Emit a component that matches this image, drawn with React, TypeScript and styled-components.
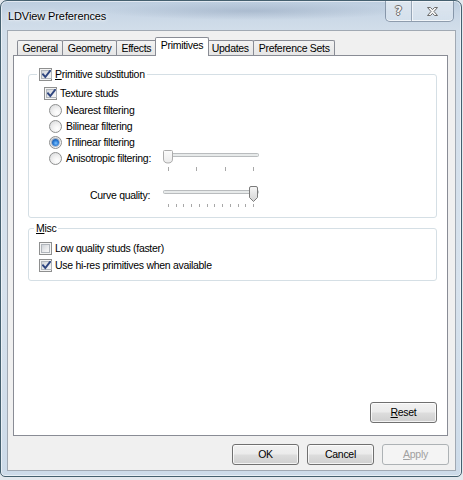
import React from 'react';
import styled, { createGlobalStyle } from 'styled-components';

const Global = createGlobalStyle`
  html, body { margin: 0; padding: 0; }
  body {
    background: #e3e8ed;
    width: 463px;
    height: 480px;
    overflow: hidden;
    font-family: "Liberation Sans", Arial, sans-serif;
    font-size: 10.5px;
    letter-spacing: -0.3px;
    color: #000;
  }
`;

const Window = styled.div`
  box-sizing: border-box;
  width: 462px;
  height: 477px;
  border: 1px solid #45606f;
  border-radius: 7px 7px 5px 5px;
  background:
    radial-gradient(ellipse 150px 9px at 250px 10px, rgba(110, 130, 160, 0.3), rgba(110, 130, 160, 0) 100%),
    linear-gradient(180deg, #bccddf 0px, #c9d7e6 14px, #d2deea 30px, #d7e2ed 60%, #cddbe9 100%);
  box-shadow: inset 0 0 0 1px rgba(255, 255, 255, 0.55);
  padding: 0 5px 5px 6px;
  display: flex;
  flex-direction: column;
`;

const TitleBar = styled.div`
  height: 29px;
  display: flex;
  align-items: flex-start;
  justify-content: space-between;
  flex-shrink: 0;
`;

const Title = styled.div`
  margin: 9px 0 0 1px;
  font-size: 11px;
  line-height: 13px;
  letter-spacing: -0.1px;
  text-shadow: 0 0 5px #fff, 0 0 2px #fff;
`;

const CaptionButtons = styled.div`
  display: flex;
  height: 20px;
  margin-right: 2px;
  border: 1px solid rgba(70, 90, 115, 0.55);
  border-top: none;
  border-radius: 0 0 5px 5px;
  overflow: hidden;
  background: linear-gradient(180deg, rgba(255, 255, 255, 0.5), rgba(225, 235, 245, 0.35));
  box-shadow: inset 0 -1px 0 rgba(255, 255, 255, 0.65);
`;

const CaptionButton = styled.div<{ $w: number }>`
  box-sizing: border-box;
  width: ${p => p.$w}px;
  display: flex;
  align-items: center;
  justify-content: center;
  & + & {
    border-left: 1px solid rgba(70, 90, 115, 0.45);
    box-shadow: inset 1px 0 0 rgba(255, 255, 255, 0.6);
  }
`;

const HelpGlyph = styled.span`
  font-family: "DejaVu Sans", sans-serif;
  font-weight: bold;
  font-size: 12px;
  line-height: 12px;
  letter-spacing: 0;
  color: #f4f4f4;
  text-shadow: 1px 0 0 #6d6d6d, -1px 0 0 #6d6d6d, 0 1px 0 #6d6d6d, 0 -1px 0 #6d6d6d;
`;

const Client = styled.div`
  flex: 1;
  min-height: 0;
  background: #f0f0f0;
  border: 1px solid #a1a9b3;
  display: flex;
  flex-direction: column;
  padding: 6px 7px 5px 5px;
`;

const TabStrip = styled.div`
  height: 18px;
  display: flex;
  align-items: flex-end;
  padding-left: 4px;
  flex-shrink: 0;
`;

const Tab = styled.div<{ $active?: boolean }>`
  box-sizing: border-box;
  position: relative;
  height: ${p => (p.$active ? 19 : 15)}px;
  margin-bottom: ${p => (p.$active ? -1 : 0)}px;
  margin-left: ${p => (p.$active ? -2 : -1)}px;
  margin-right: ${p => (p.$active ? -2 : 0)}px;
  z-index: ${p => (p.$active ? 1 : 0)};
  padding: ${p => (p.$active ? '0 5px' : '0 4.5px')};
  line-height: ${p => (p.$active ? 15 : 15)}px;
  border: 1px solid #898c95;
  border-bottom: none;
  border-radius: 2px 2px 0 0;
  background: ${p => (p.$active ? '#fff' : 'linear-gradient(180deg, #f3f3f3 0%, #ececec 50%, #e6e6e6 100%)')};
  white-space: nowrap;
  &:first-child { margin-left: 0; }
`;

const Page = styled.div`
  flex: 1;
  min-height: 0;
  background: #fff;
  border: 1px solid #898c95;
  display: flex;
  flex-direction: column;
`;

const Group = styled.fieldset<{ $top: number }>`
  margin: ${p => p.$top}px 10px 0 14px;
  padding: 0;
  border: 1px solid #d5dfe5;
  border-radius: 3px;
  min-width: 0;
`;

const Legend = styled.legend<{ $indent: number }>`
  margin-left: ${p => p.$indent}px;
  padding: 0 2px;
  height: 13px;
  line-height: 13px;
  display: flex;
  align-items: center;
  gap: 3px;
`;

const GroupBody = styled.div<{ $pt: number; $pb: number }>`
  padding: ${p => p.$pt}px 0 ${p => p.$pb}px 0;
  display: flex;
  flex-direction: column;
`;

const Row = styled.div<{ $indent: number; $mt?: number }>`
  height: 16px;
  display: flex;
  align-items: center;
  gap: ${p => (p.$indent >= 20 ? 4 : 3)}px;
  margin-left: ${p => p.$indent}px;
  margin-top: ${p => p.$mt ?? 0}px;
  white-space: nowrap;
`;

const SliderRow = styled.div<{ $mt?: number }>`
  display: flex;
  align-items: flex-start;
  margin-top: ${p => p.$mt ?? 0}px;
`;

const RadioCell = styled.div`
  box-sizing: border-box;
  width: 134px;
  height: 16px;
  padding-left: 20px;
  display: flex;
  align-items: center;
  gap: 4px;
  white-space: nowrap;
`;

const SliderLabel = styled.div`
  width: 121px;
  margin: 3px 13px 0 0;
  line-height: 13px;
  text-align: right;
  white-space: nowrap;
`;

const BoxCheck = styled.span`
  box-sizing: border-box;
  flex-shrink: 0;
  width: 13px;
  height: 13px;
  border: 1px solid #8e8f8f;
  background: #f4f4f4;
  padding: 1px;
  display: flex;
`;

const BoxInner = styled.span`
  box-sizing: border-box;
  flex: 1;
  border: 1px solid #b0b5bb;
  background: linear-gradient(135deg, #cfd3d8 0%, #e9eaec 55%, #f8f8f8 100%);
  display: flex;
  align-items: center;
  justify-content: center;
`;

const RadioCircle = styled.span`
  box-sizing: border-box;
  flex-shrink: 0;
  width: 13px;
  height: 13px;
  border-radius: 50%;
  border: 1px solid #8e8f8f;
  background: radial-gradient(circle at 65% 70%, #ffffff 0%, #f2f2f2 40%, #d4d6d8 100%);
  display: flex;
  align-items: center;
  justify-content: center;
`;

const RadioDot = styled.span`
  width: 7px;
  height: 7px;
  border-radius: 50%;
  background: radial-gradient(circle at 55% 60%, #7fc4ff 0%, #2a7bd6 45%, #0d3f86 100%);
  box-shadow: 0 0 0 1px rgba(30, 70, 130, 0.35);
`;

const U = styled.span`
  text-decoration: underline;
  text-underline-offset: 1px;
`;

const Spacer = styled.div`
  flex: 1;
`;

const PageFooter = styled.div`
  display: flex;
  justify-content: flex-end;
  padding: 0 10px 12px 0;
`;

const ButtonRow = styled.div`
  display: flex;
  justify-content: flex-end;
  gap: 8px;
  margin: 8px -1px 0 0;
  flex-shrink: 0;
`;

const Button = styled.div<{ $disabled?: boolean }>`
  box-sizing: border-box;
  width: 67px;
  height: 21px;
  border: 1px solid ${p => (p.$disabled ? '#adb2b5' : '#707070')};
  border-radius: 3px;
  background: ${p =>
    p.$disabled
      ? '#f4f4f4'
      : 'linear-gradient(180deg, #f2f2f2 0%, #ebebeb 48%, #dddddd 52%, #cfcfcf 100%)'};
  box-shadow: inset 0 0 0 1px ${p => (p.$disabled ? '#f4f4f4' : 'rgba(255,255,255,0.75)')};
  color: ${p => (p.$disabled ? '#a0a0a0' : '#000')};
  display: flex;
  align-items: center;
  justify-content: center;
  line-height: 13px;
`;

const CheckMark = () => (
  <svg width="9" height="9" viewBox="0 0 9 9">
    <path d="M1 4.4 L3.3 7 L8 1" fill="none" stroke="#2f4680" strokeWidth="2" strokeLinecap="square" strokeLinejoin="miter" />
  </svg>
);

const Checkbox: React.FC<{ checked?: boolean }> = ({ checked }) => (
  <BoxCheck>
    <BoxInner>{checked && <CheckMark />}</BoxInner>
  </BoxCheck>
);

const Radio: React.FC<{ checked?: boolean }> = ({ checked }) => (
  <RadioCircle>{checked && <RadioDot />}</RadioCircle>
);

const CloseGlyph = () => (
  <svg width="13" height="11" viewBox="0 0 13 11">
    <path
      d="M1.5 1.5 H4.5 L6.5 3.6 L8.5 1.5 H11.5 L8 5.5 L11.5 9.5 H8.5 L6.5 7.4 L4.5 9.5 H1.5 L5 5.5 Z"
      fill="#f6f6f6"
      stroke="#6d6d6d"
      strokeWidth="1"
      strokeLinejoin="round"
    />
  </svg>
);

const Slider: React.FC<{ ticks: number; atMax?: boolean; disabled?: boolean }> = ({ ticks, atMax, disabled }) => {
  const trackY = atMax ? 6 : 5;
  const tickTop = atMax ? 18 : 17;
  const xs = Array.from({ length: ticks }, (_, i) => Math.round(5 + (i * 85) / (ticks - 1)) + 0.5);
  const gid = atMax ? 'thumbA' : 'thumbB';
  return (
    <svg width="96" height="22" viewBox="0 0 96 22">
      <defs>
        <linearGradient id={gid} x1="0" y1="0" x2="0" y2="1">
          <stop offset="0" stopColor={disabled ? '#fbfbfb' : '#f7f7f7'} />
          <stop offset="1" stopColor={disabled ? '#ebebeb' : '#d3d3d3'} />
        </linearGradient>
      </defs>
      <rect x="0.5" y={trackY - 1.5} width="95" height="3" rx="1" fill="#e7eaea" stroke="#b9bcbe" />
      {xs.map((x, i) => (
        <line key={i} x1={x} x2={x} y1={tickTop} y2={tickTop + (atMax ? 3 : 4)} stroke="#a8a8a8" strokeWidth="1" />
      ))}
      {atMax ? (
        <path
          d="M86.5 2 Q86.5 0.5 88 0.5 H93 Q94.5 0.5 94.5 2 V11.5 L90.5 15.5 L86.5 11.5 Z"
          fill={`url(#${gid})`}
          stroke="#7b7b7b"
        />
      ) : (
        <path
          d="M0.5 1.5 Q0.5 0.5 1.5 0.5 H8.5 Q9.5 0.5 9.5 1.5 V9 Q9.5 13 5 13 Q0.5 13 0.5 9 Z"
          fill={`url(#${gid})`}
          stroke="#acacac"
        />
      )}
    </svg>
  );
};

export default function App() {
  return (
    <>
      <Global />
      <Window>
        <TitleBar>
          <Title>LDView Preferences</Title>
          <CaptionButtons>
            <CaptionButton $w={25}>
              <HelpGlyph>?</HelpGlyph>
            </CaptionButton>
            <CaptionButton $w={42}>
              <CloseGlyph />
            </CaptionButton>
          </CaptionButtons>
        </TitleBar>
        <Client>
          <TabStrip>
            <Tab>General</Tab>
            <Tab>Geometry</Tab>
            <Tab>Effects</Tab>
            <Tab $active>Primitives</Tab>
            <Tab>Updates</Tab>
            <Tab>Preference Sets</Tab>
          </TabStrip>
          <Page>
            <Group $top={12}>
              <Legend $indent={8}>
                <Checkbox checked />
                <span>
                  <U>P</U>rimitive substitution
                </span>
              </Legend>
              <GroupBody $pt={4} $pb={9}>
                <Row $indent={15}>
                  <Checkbox checked />
                  <span>Texture studs</span>
                </Row>
                <Row $indent={20} $mt={1}>
                  <Radio />
                  <span>Nearest filtering</span>
                </Row>
                <Row $indent={20}>
                  <Radio />
                  <span>Bilinear filtering</span>
                </Row>
                <Row $indent={20}>
                  <Radio checked />
                  <span>Trilinear filtering</span>
                </Row>
                <SliderRow>
                  <RadioCell>
                    <Radio />
                    <span>Anisotropic filtering:</span>
                  </RadioCell>
                  <Slider ticks={4} disabled />
                </SliderRow>
                <SliderRow $mt={14}>
                  <SliderLabel>Curve quality:</SliderLabel>
                  <Slider ticks={12} atMax />
                </SliderRow>
              </GroupBody>
            </Group>
            <Group $top={4}>
              <Legend $indent={5}>
                <span>
                  <U>M</U>isc
                </span>
              </Legend>
              <GroupBody $pt={5} $pb={7}>
                <Row $indent={10}>
                  <Checkbox />
                  <span>Low quality studs (faster)</span>
                </Row>
                <Row $indent={10} $mt={1}>
                  <Checkbox checked />
                  <span>Use hi-res primitives when available</span>
                </Row>
              </GroupBody>
            </Group>
            <Spacer />
            <PageFooter>
              <Button>
                <span>
                  <U>R</U>eset
                </span>
              </Button>
            </PageFooter>
          </Page>
          <ButtonRow>
            <Button>OK</Button>
            <Button>Cancel</Button>
            <Button $disabled>
              <span>
                <U>A</U>pply
              </span>
            </Button>
          </ButtonRow>
        </Client>
      </Window>
    </>
  );
}
